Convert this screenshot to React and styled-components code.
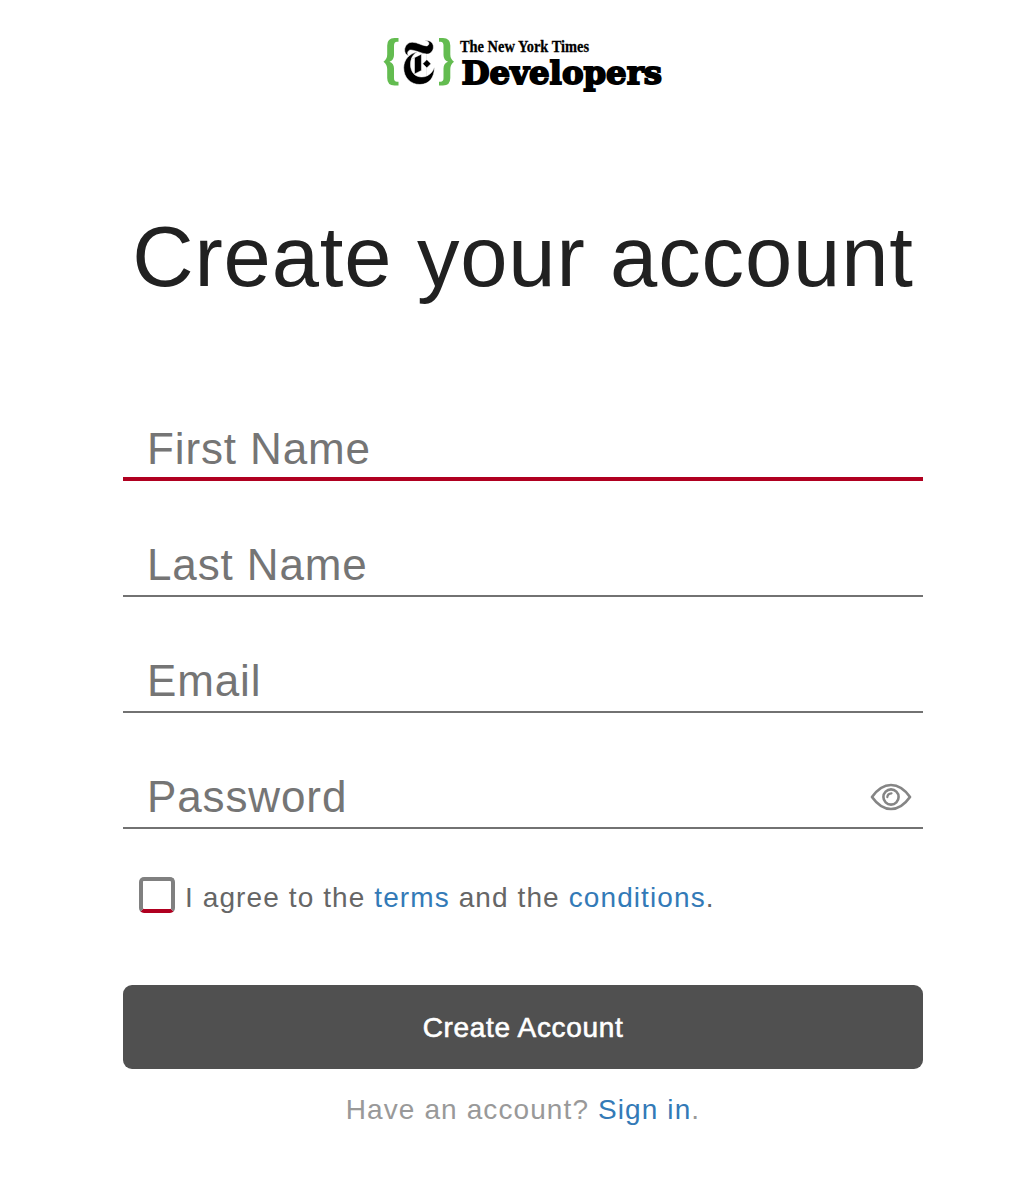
import React from "react";
import styled, { createGlobalStyle } from "styled-components";
import { SiNewyorktimes } from "react-icons/si";

const GlobalStyle = createGlobalStyle`
  *, *::before, *::after { box-sizing: border-box; }
  body {
    margin: 0;
    background: #fff;
    font-family: "Liberation Sans", Arial, sans-serif;
  }
`;

const Page = styled.main`
  display: flex;
  flex-direction: column;
  align-items: center;
  width: 1033px;
  height: 1178px;
  padding-left: 13px;
  overflow: hidden;
`;

const Logo = styled.svg`
  display: block;
  width: 300px;
  height: 70px;
  margin-top: 30px;
  flex: none;
`;

const Masthead = styled.text`
  font: bold 17px "Liberation Serif", serif;
  stroke: #000;
  stroke-width: 0.3px;
`;

const Product = styled.text`
  font: bold 32px "DejaVu Serif", serif;
  stroke: #000;
  stroke-width: 1.8px;
`;

const Title = styled.h1`
  margin: 107px 0 0;
  font-size: 85px;
  font-weight: 400;
  line-height: 100px;
  letter-spacing: 0.85px;
  color: #212121;
  white-space: nowrap;
`;

const Form = styled.form`
  display: flex;
  flex-direction: column;
  width: 800px;
  margin-top: 114px;
`;

const Field = styled.label`
  display: flex;
  align-items: flex-start;
  height: 60px;
  margin-bottom: 56px;
  padding: 0 11px 0 24px;
  border-bottom: ${(p) => (p.$active ? "4px solid #b00020" : "2px solid #727272")};
`;

const Input = styled.input`
  flex: 1;
  min-width: 0;
  height: 56px;
  padding: 0;
  border: 0;
  outline: 0;
  background: transparent;
  font: 44px "Liberation Sans", Arial, sans-serif;
  letter-spacing: 0.02em;
  color: #212121;
  &::placeholder { color: #757575; opacity: 1; }
`;

const EyeIcon = styled.svg`
  width: 42px;
  height: 28px;
  margin-top: 14px;
  flex: none;
`;

const Agreement = styled.label`
  display: flex;
  align-items: center;
  gap: 10px;
  height: 36px;
  margin: -8px 0 72px 16px;
`;

const Checkbox = styled.input`
  appearance: none;
  width: 36px;
  height: 36px;
  margin: 0;
  border: 4px solid #808080;
  border-bottom-color: #b00020;
  border-radius: 5px;
  flex: none;
`;

const Copy = styled.span`
  font-size: 28px;
  line-height: 36px;
  letter-spacing: 1.1px;
  color: ${(p) => (p.$light ? "#999" : "#666")};
  white-space: nowrap;
`;

const AgreementCopy = styled(Copy)`
  padding-top: 5px;
`;

const Link = styled.a`
  color: #337ab7;
  text-decoration: none;
`;

const Submit = styled.button`
  height: 84px;
  padding: 2px 0 0;
  border: 0;
  border-radius: 9px;
  background: #505050;
  color: #fff;
  font: 28px "Liberation Sans", Arial, sans-serif;
  letter-spacing: 0.66px;
  -webkit-text-stroke: 0.6px #fff;
`;

const Footer = styled.div`
  display: flex;
  justify-content: center;
  margin-top: 23px;
`;

const BRACE =
  "M398.500 38V41.700H397Q394 41.700 394 45.500V55Q394 60 389.500 61.700Q394 63.500 394 68.500V78Q394 81.800 397 81.800H398.500V85.500H394.500Q387.200 85.500 387.200 78V69Q387.200 64.500 383.500 61.700Q387.200 59 387.200 54.500V45.500Q387.200 38 394.500 38Z";

function DevelopersLogo() {
  return (
    <Logo viewBox="373 30 300 70" role="img" aria-label="The New York Times Developers">
      <path d={BRACE} fill="#63bc50" />
      <g transform="translate(399.200 40.500) scale(0.900 1)">
        <SiNewyorktimes size={44} color="#000" stroke="#fff" strokeWidth="0.300" />
      </g>
      <path d={BRACE} fill="#63bc50" transform="translate(837.500 0) scale(-1 1)" />
      <Masthead x="460" y="52" textLength="129" lengthAdjust="spacingAndGlyphs">The New York Times</Masthead>
      <Product x="461.500" y="84" textLength="200.500" lengthAdjust="spacingAndGlyphs">Developers</Product>
    </Logo>
  );
}

function Eye() {
  return (
    <EyeIcon viewBox="0 0 42 28" fill="none" stroke="#858585">
      <path d="M2 14Q10.500 2 21 2T40 14Q31.500 26 21 26T2 14Z" strokeWidth="2.700" strokeLinejoin="round" />
      <circle cx="21" cy="14" r="7.600" strokeWidth="2.600" />
      <path d="M17.300 14.200Q17.600 10.500 21.500 10.300" strokeWidth="2.200" strokeLinecap="round" />
    </EyeIcon>
  );
}

export default function App() {
  return (
    <>
      <GlobalStyle />
      <Page>
        <DevelopersLogo />
        <Title>Create your account</Title>
        <Form onSubmit={(e) => e.preventDefault()}>
          <Field $active><Input placeholder="First Name" /></Field>
          <Field><Input placeholder="Last Name" /></Field>
          <Field><Input placeholder="Email" type="email" /></Field>
          <Field><Input placeholder="Password" type="password" /><Eye /></Field>
          <Agreement>
            <Checkbox type="checkbox" />
            <AgreementCopy>I agree to the <Link href="#terms">terms</Link> and the <Link href="#conditions">conditions</Link>.</AgreementCopy>
          </Agreement>
          <Submit type="submit">Create Account</Submit>
          <Footer>
            <Copy $light>Have an account? <Link href="#signin">Sign in</Link>.</Copy>
          </Footer>
        </Form>
      </Page>
    </>
  );
}
